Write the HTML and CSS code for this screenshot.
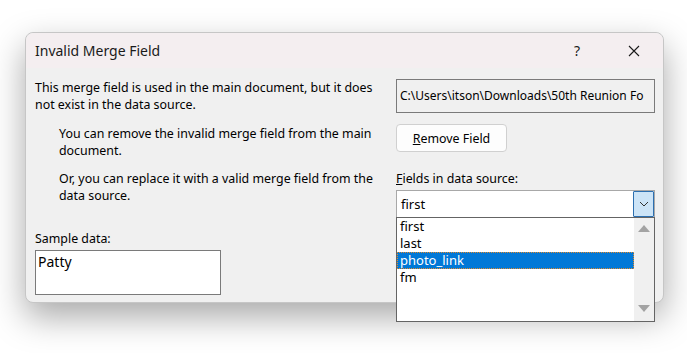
FILE: index.html
```html
<!DOCTYPE html>
<html lang="en">
  <head>
    <meta charset="UTF-8" />
    <meta name="viewport" content="width=device-width, initial-scale=1.0" />
    <title>Invalid Merge Field</title>
    <link rel="stylesheet" href="styles.css">
  </head>
  <body>
    <div class="dialog">
      <div class="titlebar">
        <span class="title">Invalid Merge Field</span>
        <span class="help">?</span>
        <span class="close">
          <svg width="12" height="12" viewBox="0 0 12 12">
            <path d="M1 1 L11 11 M11 1 L1 11" stroke="#1a1a1a" stroke-width="1.1" fill="none" />
          </svg>
        </span>
      </div>

      <div class="content">
        <div class="left">
          <p class="msg">This merge field is used in the main document, but it does not exist in the data source.</p>
          <p class="msg indent gap1">You can remove the invalid merge field from the main document.</p>
          <p class="msg indent gap2">Or, you can replace it with a valid merge field from the data source.</p>
          <label class="sample-label">Sample data:</label>
          <div class="sample-box">Patty</div>
        </div>

        <div class="right">
          <div class="path-box">C:\Users\itson\Downloads\50th Reunion Fo</div>
          <button type="button" class="btn"><u>R</u>emove Field</button>
          <label class="fields-label"><u>F</u>ields in data source:</label>
          <div class="combo">
            <span class="combo-text">first</span>
            <span class="combo-btn">
              <svg width="10" height="6" viewBox="0 0 10 6">
                <path d="M1 1 L5 5 L9 1" stroke="#333" stroke-width="1" fill="none" />
              </svg>
            </span>
            <div class="droplist">
              <ul class="items">
                <li>first</li>
                <li>last</li>
                <li class="selected">photo_link</li>
                <li>fm</li>
              </ul>
              <div class="scrollbar">
                <svg width="12" height="8" viewBox="0 0 12 8"><path d="M0 8 L6 1 L12 8 Z" fill="#a3a3a3" /></svg>
                <svg width="12" height="8" viewBox="0 0 12 8"><path d="M0 0 L6 7 L12 0 Z" fill="#a3a3a3" /></svg>
              </div>
            </div>
          </div>
        </div>
      </div>
    </div>
  </body>
</html>
```

FILE: styles.css
```css
html,
body {
  height: 100%;
}
body {
  margin: 0;
  padding: 32px 0 0 25px;
  box-sizing: border-box;
  min-height: 353px;
  background: #ffffff;
  font-family: "Noto Sans", "Open Sans", sans-serif;
  font-size: 12.4px;
  color: #000;
}
.dialog {
  width: 637px;
  height: 269px;
  background: #f0f0f0;
  border: 1px solid #c6c6c6;
  border-radius: 8px;
  box-shadow: 0 14px 34px rgba(0, 0, 0, 0.34);
}
.titlebar {
  display: flex;
  align-items: center;
  height: 35px;
  padding-left: 9px;
  background: #f4eef0;
  border-radius: 8px 8px 0 0;
}
.title {
  flex: 1;
  font-size: 14px;
  color: #1a1a1a;
}
.help {
  width: 20px;
  text-align: center;
  font-size: 14px;
  color: #1a1a1a;
  margin-right: 41px;
}
.close {
  display: flex;
  width: 12px;
  margin-right: 23px;
}
.content {
  display: grid;
  grid-template-columns: 361px 259px;
  padding: 11px 0 0 9px;
}
.left,
.right {
  display: flex;
  flex-direction: column;
  align-items: flex-start;
}
.msg {
  margin: 0;
  max-width: 345px;
  line-height: 17px;
}
.indent {
  padding-left: 24px;
  max-width: 321px;
}
.gap1 {
  margin-top: 12px;
}
.gap2 {
  margin-top: 11px;
}
.sample-label {
  margin-top: 26px;
  line-height: 17px;
}
.sample-box {
  margin-top: 3px;
  width: 182px;
  height: 43px;
  background: #fff;
  border: 1px solid #7a7a7a;
  padding-left: 2px;
  font-size: 14px;
  line-height: 22px;
}
.path-box {
  box-sizing: border-box;
  width: 259px;
  height: 34px;
  border: 1px solid #7a7a7a;
  padding-left: 3px;
  font-size: 12px;
  line-height: 32px;
  white-space: nowrap;
  overflow: hidden;
}
.btn {
  margin-top: 11px;
  width: 111px;
  height: 28px;
  background: #fdfdfd;
  border: 1px solid #d0d0d0;
  border-radius: 4px;
  font-family: inherit;
  font-size: 12.4px;
  color: #000;
  padding: 0;
}
.btn u,
.fields-label u {
  text-decoration-thickness: 1px;
}
.fields-label {
  margin-top: 18px;
  line-height: 17px;
}
.combo {
  position: relative;
  box-sizing: border-box;
  margin-top: 3px;
  width: 259px;
  height: 28px;
  background: #fff;
  border: 1px solid #a8a8a8;
  display: flex;
  align-items: center;
}
.combo-text {
  flex: 1;
  padding-left: 4px;
  font-size: 13px;
}
.combo-btn {
  box-sizing: border-box;
  width: 21px;
  height: 26px;
  background: #cce4f7;
  border: 1px solid #2c6fb0;
  border-radius: 1px;
  display: flex;
  align-items: center;
  justify-content: center;
}
.droplist {
  position: absolute;
  left: -1px;
  top: 26px;
  box-sizing: border-box;
  width: 259px;
  height: 105px;
  background: #fff;
  border: 1px solid #646464;
  display: flex;
}
.items {
  list-style: none;
  margin: 0;
  padding: 0;
  flex: 1;
}
.items li {
  height: 17px;
  line-height: 17px;
  padding-left: 3px;
  font-size: 13px;
  box-sizing: border-box;
}
.items li.selected {
  background: #0078d7;
  color: #fff;
  outline: 1px dotted #e08a2c;
  outline-offset: -1px;
}
.scrollbar {
  width: 20px;
  background: #f0f0f0;
  display: flex;
  flex-direction: column;
  justify-content: space-between;
  align-items: center;
  padding: 6px 0 8px;
}
```
